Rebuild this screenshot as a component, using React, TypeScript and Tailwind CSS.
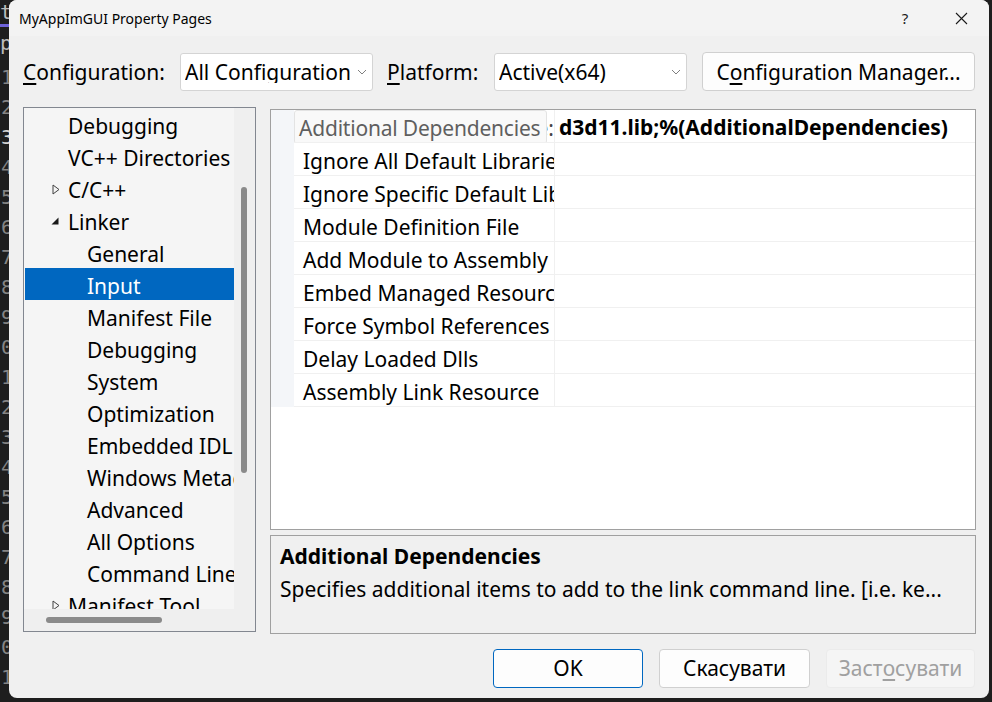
import React from 'react';

type TreeItem = {
  label: string;
  level: 1 | 2;
  arrow?: 'closed' | 'open';
  selected?: boolean;
};

const treeItems: TreeItem[] = [
  { label: 'Debugging', level: 1 },
  { label: 'VC++ Directories', level: 1 },
  { label: 'C/C++', level: 1, arrow: 'closed' },
  { label: 'Linker', level: 1, arrow: 'open' },
  { label: 'General', level: 2 },
  { label: 'Input', level: 2, selected: true },
  { label: 'Manifest File', level: 2 },
  { label: 'Debugging', level: 2 },
  { label: 'System', level: 2 },
  { label: 'Optimization', level: 2 },
  { label: 'Embedded IDL', level: 2 },
  { label: 'Windows Metadata', level: 2 },
  { label: 'Advanced', level: 2 },
  { label: 'All Options', level: 2 },
  { label: 'Command Line', level: 2 },
  { label: 'Manifest Tool', level: 1, arrow: 'closed' },
];

const gridRows = [
  'Additional Dependencies',
  'Ignore All Default Libraries',
  'Ignore Specific Default Libraries',
  'Module Definition File',
  'Add Module to Assembly',
  'Embed Managed Resource File',
  'Force Symbol References',
  'Delay Loaded Dlls',
  'Assembly Link Resource',
];

const lineNumbers = ['1', '2', '3', '4', '5', '6', '7', '8', '9', '0', '1', '2', '3', '4', '5', '6', '7', '8', '9', '0', '1'];

const Chevron = () => (
  <svg width="10" height="6" viewBox="0 0 10 6" className="shrink-0">
    <polyline points="1,1 5,5 9,1" fill="none" stroke="#707070" strokeWidth="0.9" />
  </svg>
);

const Select = ({ value }: { value: string }) => (
  <div className="w-[193px] h-[38px] bg-white border border-[#d4d4d4] rounded-[3px] flex items-center pl-[4px] pr-[5px] gap-[6px]">
    <span className="flex-1 overflow-hidden whitespace-nowrap text-[21px] leading-none text-black pt-[2px]">{value}</span>
    <Chevron />
  </div>
);

const TreeArrow = ({ kind }: { kind: 'closed' | 'open' }) =>
  kind === 'closed' ? (
    <svg width="8" height="11" viewBox="0 0 8 11" className="absolute left-[28px] top-[12px]">
      <polygon points="1,1 7,5.5 1,10" fill="none" stroke="#404040" strokeWidth="1" />
    </svg>
  ) : (
    <svg width="8" height="8" viewBox="0 0 8 8" className="absolute left-[27px] top-[13px]">
      <polygon points="7.5,0.5 7.5,7.5 0.5,7.5" fill="#1a1a1a" />
    </svg>
  );

export default function App() {
  return (
    <div className="w-[992px] h-[702px] bg-[#1e1e1e] flex overflow-hidden font-['Noto_Sans',sans-serif]">
      {/* editor behind the dialog */}
      <div className="w-[9px] shrink-0 relative overflow-hidden font-['DejaVu_Sans_Mono',monospace] text-[20px] text-[#858585]">
        <div className="absolute right-[-3px] top-[2px] leading-none text-[#bbbbbb]">t</div>
        <div className="absolute left-0 right-0 top-[24px] h-[3px] bg-[#6f63d9]" />
        <div className="absolute right-[-3px] top-[33px] leading-none text-[#bbbbbb]">p</div>
        <div className="absolute right-[-4px] top-[62px] flex flex-col items-end">
          {lineNumbers.map((n, i) => (
            <div key={i} className={`h-[30px] leading-[30px] ${i === 2 ? 'text-[#d4d4d4]' : ''}`}>{n}</div>
          ))}
        </div>
      </div>

      {/* dialog */}
      <div className="w-[980px] h-[698px] shrink-0 bg-[#f0f0f0] rounded-[8px] overflow-hidden flex flex-col text-black">
        {/* title bar */}
        <div className="h-[36px] bg-[#f3f3f3] flex items-center pl-[10px]">
          <span className="flex-1 text-[14px]">MyAppImGUI Property Pages</span>
          <div className="w-[56px] h-[36px] flex items-center justify-center text-[15px] text-[#1a1a1a]">?</div>
          <div className="w-[56px] h-[36px] flex items-center justify-center">
            <svg width="13" height="13" viewBox="0 0 13 13">
              <path d="M1 1 L12 12 M12 1 L1 12" stroke="#1a1a1a" strokeWidth="1.1" />
            </svg>
          </div>
        </div>

        {/* configuration row */}
        <div className="mt-[16px] h-[39px] flex items-center pl-[14px] pr-[14px] text-[21px]">
          <span className="w-[157px] pt-[2px]"><span className="underline underline-offset-[3px]">C</span>onfiguration:</span>
          <Select value="All Configurations" />
          <span className="ml-[14px] w-[107px] pt-[2px]"><span className="underline underline-offset-[3px]">P</span>latform:</span>
          <Select value="Active(x64)" />
          <div className="ml-[15px] w-[273px] h-[39px] bg-[#fdfdfd] border border-[#d0d0d0] rounded-[4px] flex items-center justify-center pt-[2px]">
            C<span className="underline underline-offset-[3px]">o</span>nfiguration Manager...
          </div>
        </div>

        {/* main area */}
        <div className="mt-[16px] flex items-start pl-[14px] pr-[13px] gap-[14px]">
          {/* tree */}
          <div className="w-[233px] h-[525px] border border-[#828790] flex flex-col bg-[#efefef]">
            <div className="flex h-[501px]">
              <div className="w-[210px] bg-[#f5f5f5] overflow-hidden">
                {treeItems.map((item, i) => (
                  <div
                    key={i}
                    className={`relative h-[32px] flex items-center pt-[4px] whitespace-nowrap text-[21px] ${
                      item.selected ? 'bg-[#0067c0] text-white ml-[1px]' : 'text-black'
                    } ${item.level === 1 ? 'pl-[44px]' : item.selected ? 'pl-[62px]' : 'pl-[63px]'}`}
                  >
                    {item.arrow && <TreeArrow kind={item.arrow} />}
                    <span className="leading-none">{item.label}</span>
                  </div>
                ))}
              </div>
              <div className="w-[21px] pt-[79px] pl-[7px]">
                <div className="w-[6px] h-[286px] bg-[#8a8a8a] rounded-[3px]" />
              </div>
            </div>
            <div className="h-[22px] pt-[8px] pl-[22px]">
              <div className="w-[116px] h-[6px] bg-[#8a8a8a] rounded-[3px]" />
            </div>
          </div>

          {/* property grid + description */}
          <div className="w-[707px] mt-[2px] flex flex-col gap-[5px]">
            <div className="h-[421px] bg-white border border-[#a0a0a0]">
              {gridRows.map((name, i) => (
                <div key={i} className="flex h-[33px] text-[21px]">
                  <div className="w-[23px] bg-[#f4f6f9]" />
                  <div className="relative w-[261px] border-b border-r border-[#f0f0f0] pl-[9px] pt-[5px] flex items-center overflow-hidden whitespace-nowrap">
                    {i === 0 ? (
                      <>
                        <span className="flex-1 text-right text-[#444]">e:</span>
                        <div className="absolute left-0 top-0 w-[253px] h-[34px] bg-[#f9f9f9] border border-[#e3e3e3] rounded-[3px] flex items-center pl-[4px] pt-[3px] text-[#5f5f5f] overflow-hidden whitespace-nowrap tracking-[-0.2px]">
                          Additional Dependencies
                        </div>
                      </>
                    ) : (
                      <span>{name}</span>
                    )}
                  </div>
                  <div className="flex-1 border-b border-[#f0f0f0] pl-[4px] pt-[3px] flex items-center whitespace-nowrap overflow-hidden">
                    {i === 0 && <span className="font-bold">d3d11.lib;%(AdditionalDependencies)</span>}
                  </div>
                </div>
              ))}
            </div>
            <div className="h-[99px] border border-[#a0a0a0] bg-[#f0f0f0] pl-[9px] pt-[4px] text-[21px]">
              <div className="h-[33px] flex items-center font-bold">Additional Dependencies</div>
              <div className="h-[33px] flex items-center whitespace-nowrap">
                Specifies additional items to add to the link command line. [i.e. ke...
              </div>
            </div>
          </div>
        </div>

        {/* buttons */}
        <div className="mt-[15px] flex justify-end pr-[14px] gap-[16px] text-[21px]">
          <div className="w-[150px] h-[39px] bg-[#fdfdfd] border border-[#0067c0] rounded-[4px] flex items-center justify-center">OK</div>
          <div className="w-[151px] h-[39px] bg-[#fdfdfd] border border-[#d0d0d0] rounded-[4px] flex items-center justify-center">Скасувати</div>
          <div className="w-[149px] h-[39px] bg-[#f5f5f5] border border-[#ebebeb] rounded-[4px] flex items-center justify-center text-[#a0a0a0]">
            Заст<span className="underline underline-offset-[3px]">о</span>сувати
          </div>
        </div>
      </div>
      <div className="w-[3px] shrink-0" />
    </div>
  );
}
